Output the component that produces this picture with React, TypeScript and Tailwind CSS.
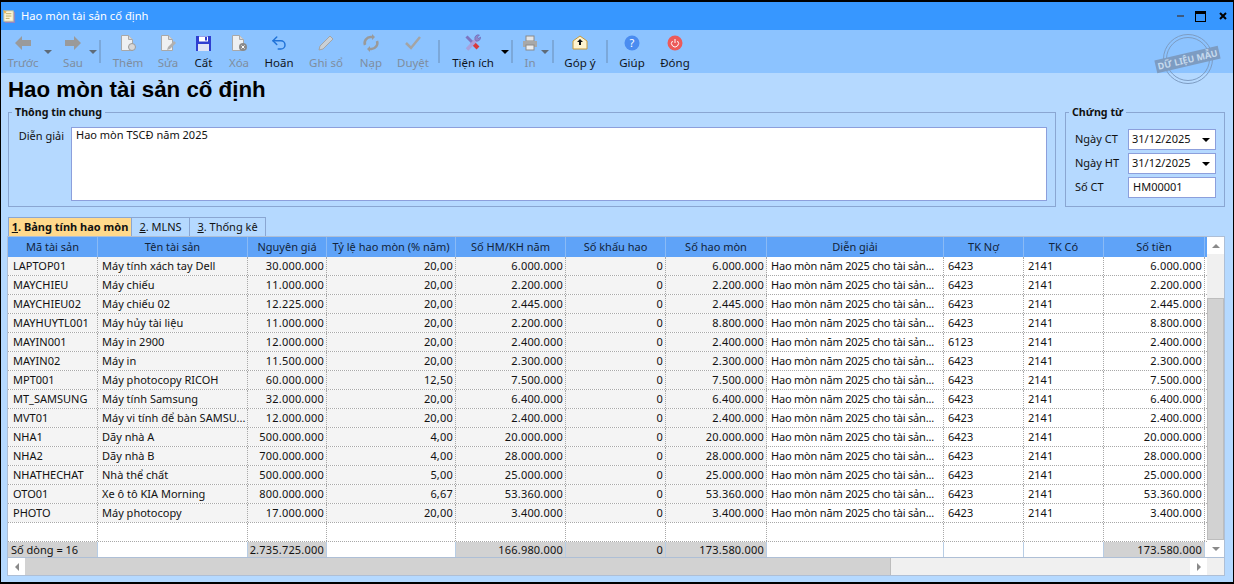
import { ReactNode } from 'react'
import { Undo2 } from 'lucide-react'

const cols = [
  { w: 'w-[90px]', title: 'Mã tài sản', right: false },
  { w: 'w-[150px]', title: 'Tên tài sản', right: false },
  { w: 'w-[79px]', title: 'Nguyên giá', right: true },
  { w: 'w-[129px]', title: 'Tỷ lệ hao mòn (% năm)', right: true },
  { w: 'w-[110px]', title: 'Số HM/KH năm', right: true },
  { w: 'w-[100px]', title: 'Số khấu hao', right: true },
  { w: 'w-[101px]', title: 'Số hao mòn', right: true },
  { w: 'w-[177px]', title: 'Diễn giải', right: false },
  { w: 'w-[80px]', title: 'TK Nợ', right: false },
  { w: 'w-[80px]', title: 'TK Có', right: false },
  { w: 'w-[101px]', title: 'Số tiền', right: true },
]

const note = 'Hao mòn năm 2025 cho tài sản...'
const rows: string[][] = [
  ['LAPTOP01', 'Máy tính xách tay Dell', '30.000.000', '20,00', '6.000.000', '0', '6.000.000', note, '6423', '2141', '6.000.000'],
  ['MAYCHIEU', 'Máy chiếu', '11.000.000', '20,00', '2.200.000', '0', '2.200.000', note, '6423', '2141', '2.200.000'],
  ['MAYCHIEU02', 'Máy chiếu 02', '12.225.000', '20,00', '2.445.000', '0', '2.445.000', note, '6423', '2141', '2.445.000'],
  ['MAYHUYTL001', 'Máy hủy tài liệu', '11.000.000', '20,00', '2.200.000', '0', '8.800.000', note, '6423', '2141', '8.800.000'],
  ['MAYIN001', 'Máy in 2900', '12.000.000', '20,00', '2.400.000', '0', '2.400.000', note, '6123', '2141', '2.400.000'],
  ['MAYIN02', 'Máy in', '11.500.000', '20,00', '2.300.000', '0', '2.300.000', note, '6423', '2141', '2.300.000'],
  ['MPT001', 'Máy photocopy RICOH', '60.000.000', '12,50', '7.500.000', '0', '7.500.000', note, '6423', '2141', '7.500.000'],
  ['MT_SAMSUNG', 'Máy tính Samsung', '32.000.000', '20,00', '6.400.000', '0', '6.400.000', note, '6423', '2141', '6.400.000'],
  ['MVT01', 'Máy vi tính để bàn SAMSU...', '12.000.000', '20,00', '2.400.000', '0', '2.400.000', note, '6423', '2141', '2.400.000'],
  ['NHA1', 'Dãy nhà A', '500.000.000', '4,00', '20.000.000', '0', '20.000.000', note, '6423', '2141', '20.000.000'],
  ['NHA2', 'Dãy nhà B', '700.000.000', '4,00', '28.000.000', '0', '28.000.000', note, '6423', '2141', '28.000.000'],
  ['NHATHECHAT', 'Nhà thể chất', '500.000.000', '5,00', '25.000.000', '0', '25.000.000', note, '6423', '2141', '25.000.000'],
  ['OTO01', 'Xe ô tô KIA Morning', '800.000.000', '6,67', '53.360.000', '0', '53.360.000', note, '6423', '2141', '53.360.000'],
  ['PHOTO', 'Máy photocopy', '17.000.000', '20,00', '3.400.000', '0', '3.400.000', note, '6423', '2141', '3.400.000'],
  ['', '', '', '', '', '', '', '', '', '', ''],
]

const footer: { text: string; grey: boolean }[] = [
  { text: 'Số dòng = 16', grey: true },
  { text: '', grey: false },
  { text: '2.735.725.000', grey: true },
  { text: '', grey: false },
  { text: '166.980.000', grey: true },
  { text: '0', grey: true },
  { text: '173.580.000', grey: true },
  { text: '', grey: false },
  { text: '', grey: false },
  { text: '', grey: false },
  { text: '173.580.000', grey: true },
]

function Tool({ label, active, children, w, muted }: { label: string; active?: boolean; children: ReactNode; w: string; muted?: boolean }) {
  return (
    <div className={`flex flex-col items-center shrink-0 ${w}`}>
      <div className="h-[22px] flex items-center justify-center">{children}</div>
      <span className={`text-[11.500px] leading-[16px] mt-[1px] whitespace-nowrap ${active ? 'text-[#10141c]' : muted ? 'text-[#7f8d9e]' : 'text-[#1c3048]'}`}>{label}</span>
    </div>
  )
}

function Sep({ className }: { className: string }) {
  return <div className={`w-[2px] h-[23px] bg-[#7ba8da] self-center shrink-0 ${className}`} />
}

function Caret({ dark, className }: { dark?: boolean; className: string }) {
  return <div className={`shrink-0 w-0 h-0 border-x-[4px] border-x-transparent border-t-[4px] ${className} ${dark ? 'border-t-black' : 'border-t-[#5e6b78]'}`} />
}

function DocIcon({ children }: { children?: ReactNode }) {
  return (
    <svg width="18" height="18" viewBox="0 0 18 18">
      <path d="M2.500 1.500h7l4 4v11h-11z" fill="#eef0f2" stroke="#a8a8a8" />
      <path d="M9.500 1.500v4h4" fill="#d8d8d8" stroke="#a8a8a8" />
      {children}
    </svg>
  )
}

function DateBox({ value }: { value: string }) {
  return (
    <div className="w-[88px] h-[21px] bg-white border border-[#8c9fdc] flex items-center justify-between pl-[3px] pr-[5px]">
      <span>{value}</span>
      <span className="w-0 h-0 border-x-[4px] border-x-transparent border-t-[4px] border-t-black" />
    </div>
  )
}

function ScrollBtn({ dir }: { dir: 'up' | 'down' | 'left' | 'right' }) {
  const arrow = {
    up: 'border-x-[4px] border-x-transparent border-b-[4px] border-b-[#8a8a8a]',
    down: 'border-x-[4px] border-x-transparent border-t-[4px] border-t-[#8a8a8a]',
    left: 'border-y-[4px] border-y-transparent border-r-[4px] border-r-[#8a8a8a]',
    right: 'border-y-[4px] border-y-transparent border-l-[4px] border-l-[#8a8a8a]',
  }[dir]
  return (
    <div className="w-[17px] h-[17px] bg-white flex items-center justify-center shrink-0">
      <span className={`w-0 h-0 ${arrow}`} />
    </div>
  )
}

export default function App() {
  return (
    <div className="w-[1234px] h-[584px] overflow-hidden bg-[#b5d9ff] border border-black border-t-2 border-b-2 flex flex-col font-['Noto_Sans',Tahoma,sans-serif] text-[11px] text-[#111]">
      {/* title bar */}
      <div className="h-[28px] bg-[#3797ff] flex items-center shrink-0 pl-[1px] pr-[6px]">
        <svg width="15" height="15" viewBox="0 0 16 16" className="shrink-0">
          <rect x="3" y="3" width="11" height="12" rx="1" fill="#8f86c9" />
          <rect x="2" y="2" width="10" height="11" fill="#fdf6d8" stroke="#c9c39a" />
          <path d="M4 5h6M4 7.500h6M4 10h4" stroke="#b9a860" />
          <path d="M1 1l4 2-2 2z" fill="#e8b04a" />
        </svg>
        <span className="ml-[4px] text-white text-[11.200px]">Hao mòn tài sản cố định</span>
        <div className="ml-auto flex items-center">
          <div className="w-[7px] h-[2px] bg-[#3c5a80] mr-[11px]" />
          <div className="w-[11px] h-[11px] border border-black border-t-[3px] mr-[13px]" />
          <svg width="8" height="8" viewBox="0 0 8 8"><path d="M1 1l6 6M7 1L1 7" stroke="#000" strokeWidth="2" /></svg>
        </div>
      </div>

      {/* toolbar */}
      <div className="relative h-[43px] bg-[#8cc3ff] flex items-center shrink-0">
        <Tool label="Trước" w="w-[44px]" muted>
          <svg width="18" height="16" viewBox="0 0 18 16"><path d="M1 8l7-7v4h9v6H8v4z" fill="#9a9a9a" /></svg>
        </Tool>
        <Caret className="ml-[-1px] mr-[3px]" />
        <Tool label="Sau" w="w-[36px]" muted>
          <svg width="18" height="16" viewBox="0 0 18 16"><path d="M17 8l-7-7v4H1v6h9v4z" fill="#9a9a9a" /></svg>
        </Tool>
        <Caret className="ml-[-2px] mr-[2px]" />
        <Sep className="mr-[7px]" />
        <Tool label="Thêm" w="w-[40px]" muted><DocIcon><circle cx="13" cy="13" r="3.500" fill="#d8d8d8" stroke="#9a9a9a" /></DocIcon></Tool>
        <Tool label="Sửa" w="w-[40px]" muted><DocIcon><path d="M8 16l1-3 6-6 2 2-6 6z" fill="#b0b0b0" /></DocIcon></Tool>
        <Tool label="Cất" w="w-[31px]" active>
          <svg width="15" height="16" viewBox="0 0 15 16">
            <path d="M0 1h15v15H0z" fill="#2f3fd0" />
            <rect x="3" y="1.500" width="9" height="5" fill="#fff" />
            <rect x="2" y="9" width="11" height="7" fill="#dfe4f5" />
            <rect x="9" y="2" width="2" height="3.500" fill="#2f3fd0" />
          </svg>
        </Tool>
        <Tool label="Xóa" w="w-[40px]" muted><DocIcon><circle cx="13" cy="13" r="4" fill="#8a8a8a" /><path d="M11.500 11.500l3 3M14.500 11.500l-3 3" stroke="#fff" /></DocIcon></Tool>
        <Tool label="Hoãn" w="w-[40px]" active>
          <Undo2 size={18} color="#2173d8" strokeWidth={2} />
        </Tool>
        <Tool label="Ghi sổ" w="w-[54px]" muted>
          <svg width="18" height="18" viewBox="0 0 18 18"><path d="M2 16l1-4L13 2l3 3L6 15z" fill="#c9d0d6" stroke="#a4a4a4" /></svg>
        </Tool>
        <Tool label="Nạp" w="w-[36px]" muted>
          <svg width="18" height="18" viewBox="0 0 18 18" fill="none"><path d="M3 11A6 6 0 0 1 9 3h2M15 7a6 6 0 0 1-6 8H7" stroke="#9a9a9a" strokeWidth="2.500" /><path d="M10 0l3 3-3 3zM8 12l-3 3 3 3z" fill="#9a9a9a" /></svg>
        </Tool>
        <Tool label="Duyệt" w="w-[48px]" muted>
          <svg width="18" height="16" viewBox="0 0 18 16" fill="none"><path d="M2 8l5 5L16 2" stroke="#a4a4a4" strokeWidth="2.500" /></svg>
        </Tool>
        <Sep className="ml-[1px]" />
        <Tool label="Tiện ích" w="w-[66px]" active>
          <svg width="18" height="18" viewBox="0 0 18 18" fill="none">
            <path d="M2.500 2.500l6 6" stroke="#7d74c0" strokeWidth="3" />
            <path d="M8 8l6 6" stroke="#d83a3a" strokeWidth="4" />
            <path d="M3 15.500L12 6" stroke="#a8a0dc" strokeWidth="3.500" />
            <path d="M11 5.500a3.500 3.500 0 0 1 4.500-4.500l-2 2 1 1.500 2-1.500a3.500 3.500 0 0 1-4.500 4z" fill="#8f86c9" stroke="#5e54a8" strokeWidth="0.500" />
          </svg>
        </Tool>
        <Caret dark className="ml-[-5px] mr-[2px]" />
        <Sep className="" />
        <Tool label="In" w="w-[34px]" muted>
          <svg width="16" height="16" viewBox="0 0 16 16"><rect x="4" y="1" width="8" height="5" fill="#e6e6e6" stroke="#8a8a8a" /><rect x="1" y="6" width="14" height="6" fill="#a8a8a8" /><rect x="4" y="10" width="8" height="5" fill="#eee" stroke="#8a8a8a" /></svg>
        </Tool>
        <Caret className="ml-[-6px] mr-[3px]" />
        <Sep className="" />
        <Tool label="Góp ý" w="w-[52px]" active>
          <svg width="16" height="16" viewBox="0 0 16 16"><path d="M1 6l7-5 7 5v8H1z" fill="#fdf3cf" stroke="#c89a3a" /><path d="M8 4l3 3H9v3H7V7H5z" fill="#111" /></svg>
        </Tool>
        <Sep className="" />
        <Tool label="Giúp" w="w-[48px]" active>
          <svg width="16" height="16" viewBox="0 0 16 16"><circle cx="8" cy="8" r="7.500" fill="#4a8cf0" /><text x="8" y="12" textAnchor="middle" fontSize="11" fill="#fff">?</text></svg>
        </Tool>
        <Tool label="Đóng" w="w-[38px]" active>
          <svg width="16" height="16" viewBox="0 0 16 16" fill="none"><circle cx="8" cy="8" r="7.500" fill="#ec5a5a" /><path d="M5.500 6a3.500 3.500 0 1 0 5 0M8 4v4" stroke="#fff" /></svg>
        </Tool>
        {/* stamp */}
        <div className="absolute right-[20px] top-[4px] w-[50px] h-[50px] rounded-full border-[4px] border-double border-[#7d9cc2] flex items-center justify-center">
          <span className="-rotate-[13deg] whitespace-nowrap bg-[#7d9cc2] text-[#c6daee] text-[9px] font-bold px-[2px] leading-[13px]">DỮ LIỆU MẪU</span>
        </div>
      </div>

      {/* heading */}
      <h1 className="h-[34px] pl-[7px] text-[22.300px] leading-[33px] font-bold text-black shrink-0 font-['Liberation_Sans',Arial,sans-serif]">Hao mòn tài sản cố định</h1>

      {/* groups */}
      <div className="flex gap-[9px] px-[7px] shrink-0">
        <fieldset className="w-[1048px] h-[100px] border border-[#8aa6d2] px-[7px] flex-none">
          <legend className="ml-[-4px] px-[3px] font-bold text-[10.700px] leading-[11px]">Thông tin chung</legend>
          <div className="flex mt-[9px]">
            <span className="w-[55px] text-right pr-[7px] leading-[15px] mt-[1px]">Diễn giải</span>
            <div className="w-[976px] h-[74px] bg-white border border-[#8c9fdc] px-[4px] leading-[14px]">Hao mòn TSCĐ năm 2025</div>
          </div>
        </fieldset>
        <fieldset className="w-[160px] h-[100px] border border-[#8aa6d2] flex-none">
          <legend className="ml-[3px] px-[3px] font-bold text-[10.700px] leading-[11px]">Chứng từ</legend>
          <div className="flex flex-col gap-[3px] mt-[11px] pl-[9px]">
            <div className="flex items-center"><span className="w-[53px]">Ngày CT</span><DateBox value="31/12/2025" /></div>
            <div className="flex items-center"><span className="w-[53px]">Ngày HT</span><DateBox value="31/12/2025" /></div>
            <div className="flex items-center"><span className="w-[53px]">Số CT</span><div className="w-[88px] h-[21px] bg-white border border-[#8c9fdc] flex items-center pl-[4px]">HM00001</div></div>
          </div>
        </fieldset>
      </div>

      {/* tabs */}
      <div className="flex h-[19px] mt-[10px] ml-[7px] shrink-0">
        <div className="w-[124px] bg-[#ffd98c] border border-[#8aa6d2] border-b-0 flex items-center justify-center font-bold"><span><u>1</u>. Bảng tính hao mòn</span></div>
        <div className="w-[58px] border-t border-r border-[#8aa6d2] flex items-center justify-center"><span><u>2</u>. MLNS</span></div>
        <div className="w-[76px] border-t border-r border-[#8aa6d2] flex items-center justify-center"><span><u>3</u>. Thống kê</span></div>
      </div>

      {/* grid */}
      <div className="ml-[6px] w-[1218px] h-[340px] border border-[#aebfd6] flex flex-col bg-[#d4d4d4] shrink-0">
        <div className="flex h-[320px] shrink-0">
          <div className="w-[1199px] flex flex-col shrink-0 bg-white">
            <div className="flex h-[20px] bg-[#5fa3f8] shrink-0">
              {cols.map((c) => (
                <div key={c.title} className={`${c.w} shrink-0 border-r border-[#8abaf5] flex items-center justify-center text-[#12233a] whitespace-nowrap`}>{c.title}</div>
              ))}
            </div>
            {rows.map((r, i) => (
              <div key={i} className="flex h-[19px] shrink-0 border-b border-dotted border-[#a8a8a8]">
                {r.map((v, j) => {
                  const readonly = j < 7 && r[0] !== ''
                  return (
                    <div key={j} className={`${cols[j].w} shrink-0 border-r border-dotted border-[#a8a8a8] leading-[18px] whitespace-nowrap overflow-hidden ${cols[j].right ? 'text-right pr-[2px] tracking-[0.2px]' : j === 0 ? 'pl-[5px]' : j === 7 ? 'pl-[4px] tracking-[-0.2px]' : 'pl-[4px]'} ${readonly ? 'bg-[#f4f4f4]' : 'bg-white'}`}>{v}</div>
                  )
                })}
              </div>
            ))}
            <div className="flex h-[15px] shrink-0 bg-white">
              {footer.map((f, j) => (
                <div key={j} className={`${cols[j].w} shrink-0 border-r border-[#b8cde4] leading-[15px] whitespace-nowrap ${j === 0 ? 'pl-[3px]' : 'text-right pr-[2px] tracking-[0.2px]'} ${f.grey ? 'bg-[#d2d2d2]' : 'bg-white'}`}>{f.text}</div>
              ))}
            </div>
          </div>
          <div className="w-[17px] flex flex-col shrink-0 bg-[#f0f0f0]">
            <ScrollBtn dir="up" />
            <div className="h-[44px] bg-[#f0f0f0]" />
            <div className="flex-1 bg-[#d2d2d2] border border-[#bdbdbd]" />
            <ScrollBtn dir="down" />
          </div>
        </div>
        <div className="flex h-[18px] shrink-0 bg-[#f0f0f0] border-t border-[#aebfd6]">
          <ScrollBtn dir="left" />
          <div className="w-[866px] bg-[#d2d2d2] border-r border-[#bdbdbd]" />
          <div className="flex-1" />
          <ScrollBtn dir="right" />
          <div className="w-[17px] bg-[#f0f0f0]" />
        </div>
      </div>
    </div>
  )
}
